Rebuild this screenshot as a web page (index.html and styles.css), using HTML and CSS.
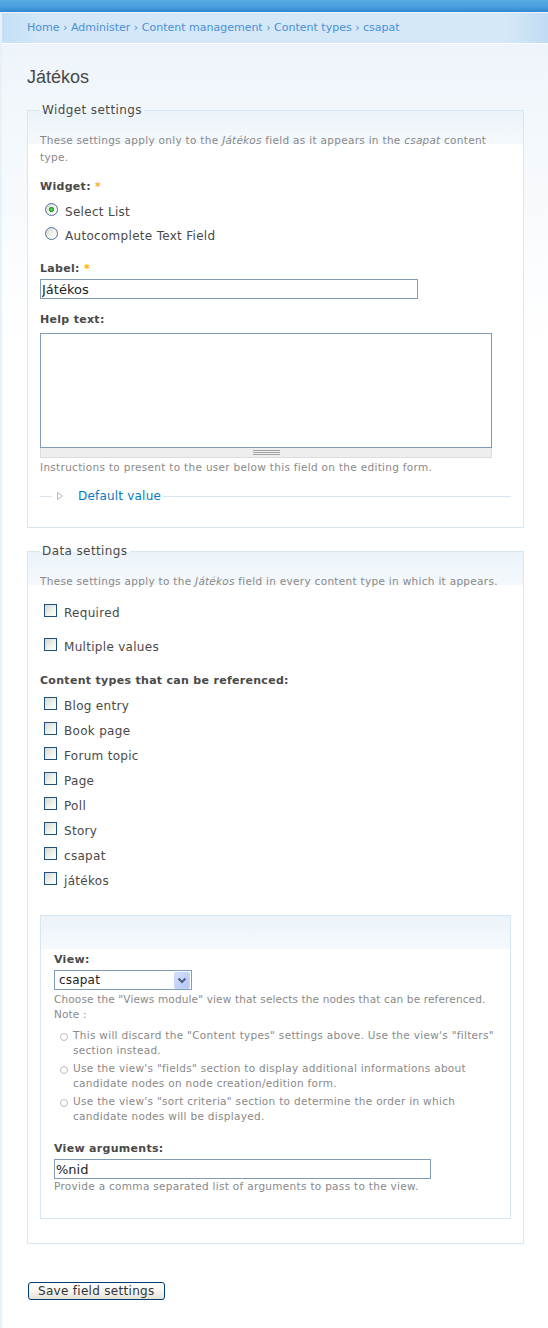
FILE: index.html
```html
<!DOCTYPE html>
<html lang="hu">
<head>
<meta charset="utf-8">
<title>Játékos</title>
<link rel="stylesheet" href="styles.css">
</head>
<body>
<div class="topbar"></div>
<div class="page">
  <nav class="breadcrumb"><a href="#">Home</a> › <a href="#">Administer</a> › <a href="#">Content management</a> › <a href="#">Content types</a> › <a href="#">csapat</a></nav>
  <main class="content">
    <h2 class="title">Játékos</h2>
    <form class="field-form">
      <fieldset class="fs">
        <legend>Widget settings</legend>
        <p class="intro">These settings apply only to the <em>Játékos</em> field as it appears in the <em>csapat</em> content type.</p>
        <div class="item item-widget">
          <div class="lbl">Widget: <span class="req">*</span></div>
          <div class="radios">
            <label class="opt"><input class="radio" type="radio" name="widget" checked>Select List</label>
            <label class="opt"><input class="radio" type="radio" name="widget">Autocomplete Text Field</label>
          </div>
        </div>
        <div class="item item-gap">
          <label class="lbl" for="label">Label: <span class="req">*</span></label>
          <input class="text" id="label" type="text" value="Játékos">
        </div>
        <div class="item item-gap">
          <label class="lbl" for="help">Help text:</label>
          <textarea class="textarea" id="help"></textarea>
          <div class="grippie"><span></span></div>
          <p class="desc desc-after-grip">Instructions to present to the user below this field on the editing form.</p>
        </div>
        <fieldset class="collapsed">
          <legend><a href="#"><svg width="8" height="10" viewBox="0 0 8 10"><polygon points="1.5,1.5 6.5,5 1.5,8.5" fill="#fff" stroke="#b9b9b9"/></svg>Default value</a></legend>
        </fieldset>
      </fieldset>

      <fieldset class="fs fs-data">
        <legend>Data settings</legend>
        <p class="intro">These settings apply to the <em>Játékos</em> field in every content type in which it appears.</p>
        <label class="opt check-row"><input class="cb" type="checkbox">Required</label>
        <label class="opt check-row"><input class="cb" type="checkbox">Multiple values</label>
        <div class="item item-types">
          <div class="lbl">Content types that can be referenced:</div>
          <div class="checkboxes">
            <label class="opt type-row"><input class="cb" type="checkbox">Blog entry</label>
            <label class="opt type-row"><input class="cb" type="checkbox">Book page</label>
            <label class="opt type-row"><input class="cb" type="checkbox">Forum topic</label>
            <label class="opt type-row"><input class="cb" type="checkbox">Page</label>
            <label class="opt type-row"><input class="cb" type="checkbox">Poll</label>
            <label class="opt type-row"><input class="cb" type="checkbox">Story</label>
            <label class="opt type-row"><input class="cb" type="checkbox">csapat</label>
            <label class="opt type-row"><input class="cb" type="checkbox">játékos</label>
          </div>
        </div>
        <fieldset class="inner">
          <div class="item">
            <label class="lbl" for="view">View:</label>
            <div class="select">
              <select id="view"><option>csapat</option></select>
              <svg class="arrow" width="16" height="17" viewBox="0 0 16 17">
                <defs><linearGradient id="ab" x1="0" y1="0" x2="1" y2="1"><stop offset="0" stop-color="#d5e0fc"/><stop offset="1" stop-color="#b2c5f4"/></linearGradient></defs>
                <rect x="0.5" y="0.5" width="15" height="16" rx="1.5" fill="url(#ab)" stroke="#c6d5fb"/>
                <path d="M4.5 6.5 L8 10 L11.5 6.5" fill="none" stroke="#4d6185" stroke-width="2"/>
              </svg>
            </div>
            <p class="desc desc-after-select">Choose the "Views module" view that selects the nodes that can be referenced.<br>Note :</p>
            <ul class="notes">
              <li><span>This will discard the "Content types" settings above. Use the view's "filters" section instead.</span></li>
              <li><span>Use the view's "fields" section to display additional informations about candidate nodes on node creation/edition form.</span></li>
              <li><span>Use the view's "sort criteria" section to determine the order in which candidate nodes will be displayed.</span></li>
            </ul>
          </div>
          <div class="item item-args">
            <label class="lbl" for="args">View arguments:</label>
            <input class="text text-args" id="args" type="text" value="%nid">
            <p class="desc">Provide a comma separated list of arguments to pass to the view.</p>
          </div>
        </fieldset>
      </fieldset>

      <div class="actions"><button class="btn" type="button">Save field settings</button></div>
    </form>
  </main>
</div>
</body>
</html>
```
FILE: styles.css
```css
* { box-sizing: border-box; }
html, body { margin: 0; }
body {
  background: #e7f1f9;
  font-family: "DejaVu Sans", Verdana, sans-serif;
  font-size: 12px;
  letter-spacing: 0.3px;
  color: #494949;
}
.topbar {
  height: 12px;
  background: linear-gradient(to bottom, #58abe3 0%, #4a9fde 55%, #2f86d0 100%);
}
.page {
  margin-left: 2px;
  min-height: 1316px;
  background: linear-gradient(to bottom, #ecf3f9 0, #f3f8fc 120px, #fff 330px);
}
.breadcrumb {
  height: 32px;
  border-top: 1px solid #eef6fd;
  border-bottom: 1px solid #fbfdff;
  background: linear-gradient(to right, #c4dff6 0, #d3e7f8 38px, #d5e8f8 505px, #c0dbf4 546px);
  padding-left: 25px;
  line-height: 30px;
  font-size: 11px;
  letter-spacing: 0;
  color: #4a90d6;
}
.breadcrumb a { color: #4a90d6; text-decoration: none; }

.content { padding: 22px 24px 30px 25px; }
.title {
  margin: 0 0 15px;
  font: normal 18px/22px "Liberation Sans", Arial, sans-serif;
  letter-spacing: 0;
  color: #494949;
}

.fs {
  margin: 0;
  min-inline-size: 0;
  border: 1px solid #d6e7f4;
  padding: 15px 12px 23px;
  background: #fff linear-gradient(to bottom, #ebf3f9 0, #f5f9fd 33px, #fff 33px) no-repeat;
}
.fs + .fs { margin-top: 16px; }
.fs > legend {
  padding: 0 2px;
  font-size: 12px;
  line-height: 14px;
  letter-spacing: 0.4px;
  color: #494949;
}
.intro {
  margin: 0;
  font-size: 10.5px;
  line-height: 17px;
  letter-spacing: 0.3px;
  color: #898989;
}
.desc {
  margin: 0;
  font-size: 10.5px;
  line-height: 15px;
  letter-spacing: 0.3px;
  color: #898989;
}
em { font-style: italic; letter-spacing: 0.2px; }

.lbl {
  display: block;
  font-weight: bold;
  font-size: 11px;
  line-height: 16px;
  margin-bottom: 2px;
  color: #494949;
}
.req { color: #ffae00; }

.item-widget { margin-top: 13px; }
.radios { margin-top: 5px; }
.item-gap { margin-top: 13px; }

.opt {
  display: flex;
  align-items: baseline;
  line-height: 24px;
}
.radio {
  appearance: none;
  flex: none;
  width: 13px;
  height: 13px;
  margin: 0 7px 0 5px;
  border: 1px solid #4f729b;
  border-radius: 50%;
  background: linear-gradient(135deg, #d8d8d2 0%, #f4f4f1 60%, #fff 100%);
}
.radio:checked {
  background:
    radial-gradient(circle, #6fdc6f 0, #22a322 2.2px, rgba(34,163,34,0) 3px),
    linear-gradient(135deg, #d8d8d2 0%, #f4f4f1 60%, #fff 100%);
}
.cb {
  appearance: none;
  flex: none;
  width: 13px;
  height: 13px;
  margin: 0 7px 0 4px;
  border: 1px solid #1c5180;
  background: linear-gradient(135deg, #d9d9d2 0%, #f2f2ee 60%, #fff 100%);
}

.text {
  display: block;
  width: 378px;
  height: 20px;
  margin: 0;
  padding: 0 1px;
  border: 1px solid #7f9db9;
  background: #fff;
  font: 13px "DejaVu Sans", Verdana, sans-serif;
  letter-spacing: 0;
  color: #222;
}
.text-args { width: 377px; }

.textarea {
  display: block;
  width: 452px;
  height: 115px;
  margin: 5px 0 0;
  border: 1px solid #7f9db9;
  resize: none;
  background: #fff;
}
.grippie {
  width: 452px;
  height: 10px;
  background: #eee;
  border: 1px solid #ddd;
  border-top: 0;
  display: flex;
  justify-content: center;
  align-items: center;
}
.grippie span {
  width: 27px;
  height: 5px;
  background: repeating-linear-gradient(to bottom, #a3a3a3 0 1px, transparent 1px 2px);
}
.desc-after-grip { margin-top: 2px; }

.collapsed {
  margin: 14px 0 0;
  min-inline-size: 0;
  padding: 0 12px;
  border: 0;
  border-top: 1px solid #d6e7f4;
}
.collapsed legend {
  padding: 0 2px 0 4px;
  line-height: 14px;
  font-size: 12px;
  letter-spacing: 0.2px;
}
.collapsed a {
  display: inline-flex;
  align-items: center;
  gap: 14px;
  color: #027ac6;
  text-decoration: none;
}

.check-row { line-height: 22px; margin-top: 12px; }
.item-types { margin-top: 15px; }
.checkboxes { margin-top: 5px; }
.type-row { line-height: 25px; }

.inner {
  margin: 21px 0 1px;
  min-inline-size: 0;
  border: 1px solid #d6e7f4;
  padding: 36px 13px 24px;
  background: #fff linear-gradient(to bottom, #ebf3f9 0, #f5f9fd 33px, #fff 33px) no-repeat;
}
.select {
  display: grid;
  width: 138px;
}
.select > * { grid-area: 1 / 1; }
.select select {
  appearance: none;
  width: 138px;
  height: 20px;
  margin: 0;
  padding: 0 0 0 4px;
  border: 1px solid #7f9db9;
  border-radius: 0;
  background: #fff;
  font: 12px "DejaVu Sans", Verdana, sans-serif;
  letter-spacing: 0.2px;
  color: #222;
}
.select .arrow {
  justify-self: end;
  align-self: center;
  margin-right: 2px;
  pointer-events: none;
}
.desc-after-select { margin-top: 2px; letter-spacing: 0.15px; }
.notes {
  list-style: none;
  margin: 6px 0 0;
  padding: 0;
}
.notes li {
  display: grid;
  grid-template-columns: 19px 1fr;
  font-size: 10.5px;
  line-height: 15px;
  letter-spacing: 0.3px;
  color: #898989;
  margin-bottom: 3px;
}
.notes li::before {
  content: "";
  width: 6px;
  height: 6px;
  margin: 5px 0 0 6px;
  border: 1px solid #bdbdbd;
  border-radius: 50%;
}
.item-args { margin-top: 17px; }

.actions { padding-top: 38px; }
.btn {
  margin: 0 0 0 1px;
  height: 18px;
  padding: 0 9px;
  border: 1px solid #003c74;
  border-radius: 3px;
  background: linear-gradient(to bottom, #fff 0%, #f5f4ef 55%, #e3e0d5 100%);
  font: 12px/16px "DejaVu Sans", Verdana, sans-serif;
  letter-spacing: 0.3px;
  color: #333;
}
```
